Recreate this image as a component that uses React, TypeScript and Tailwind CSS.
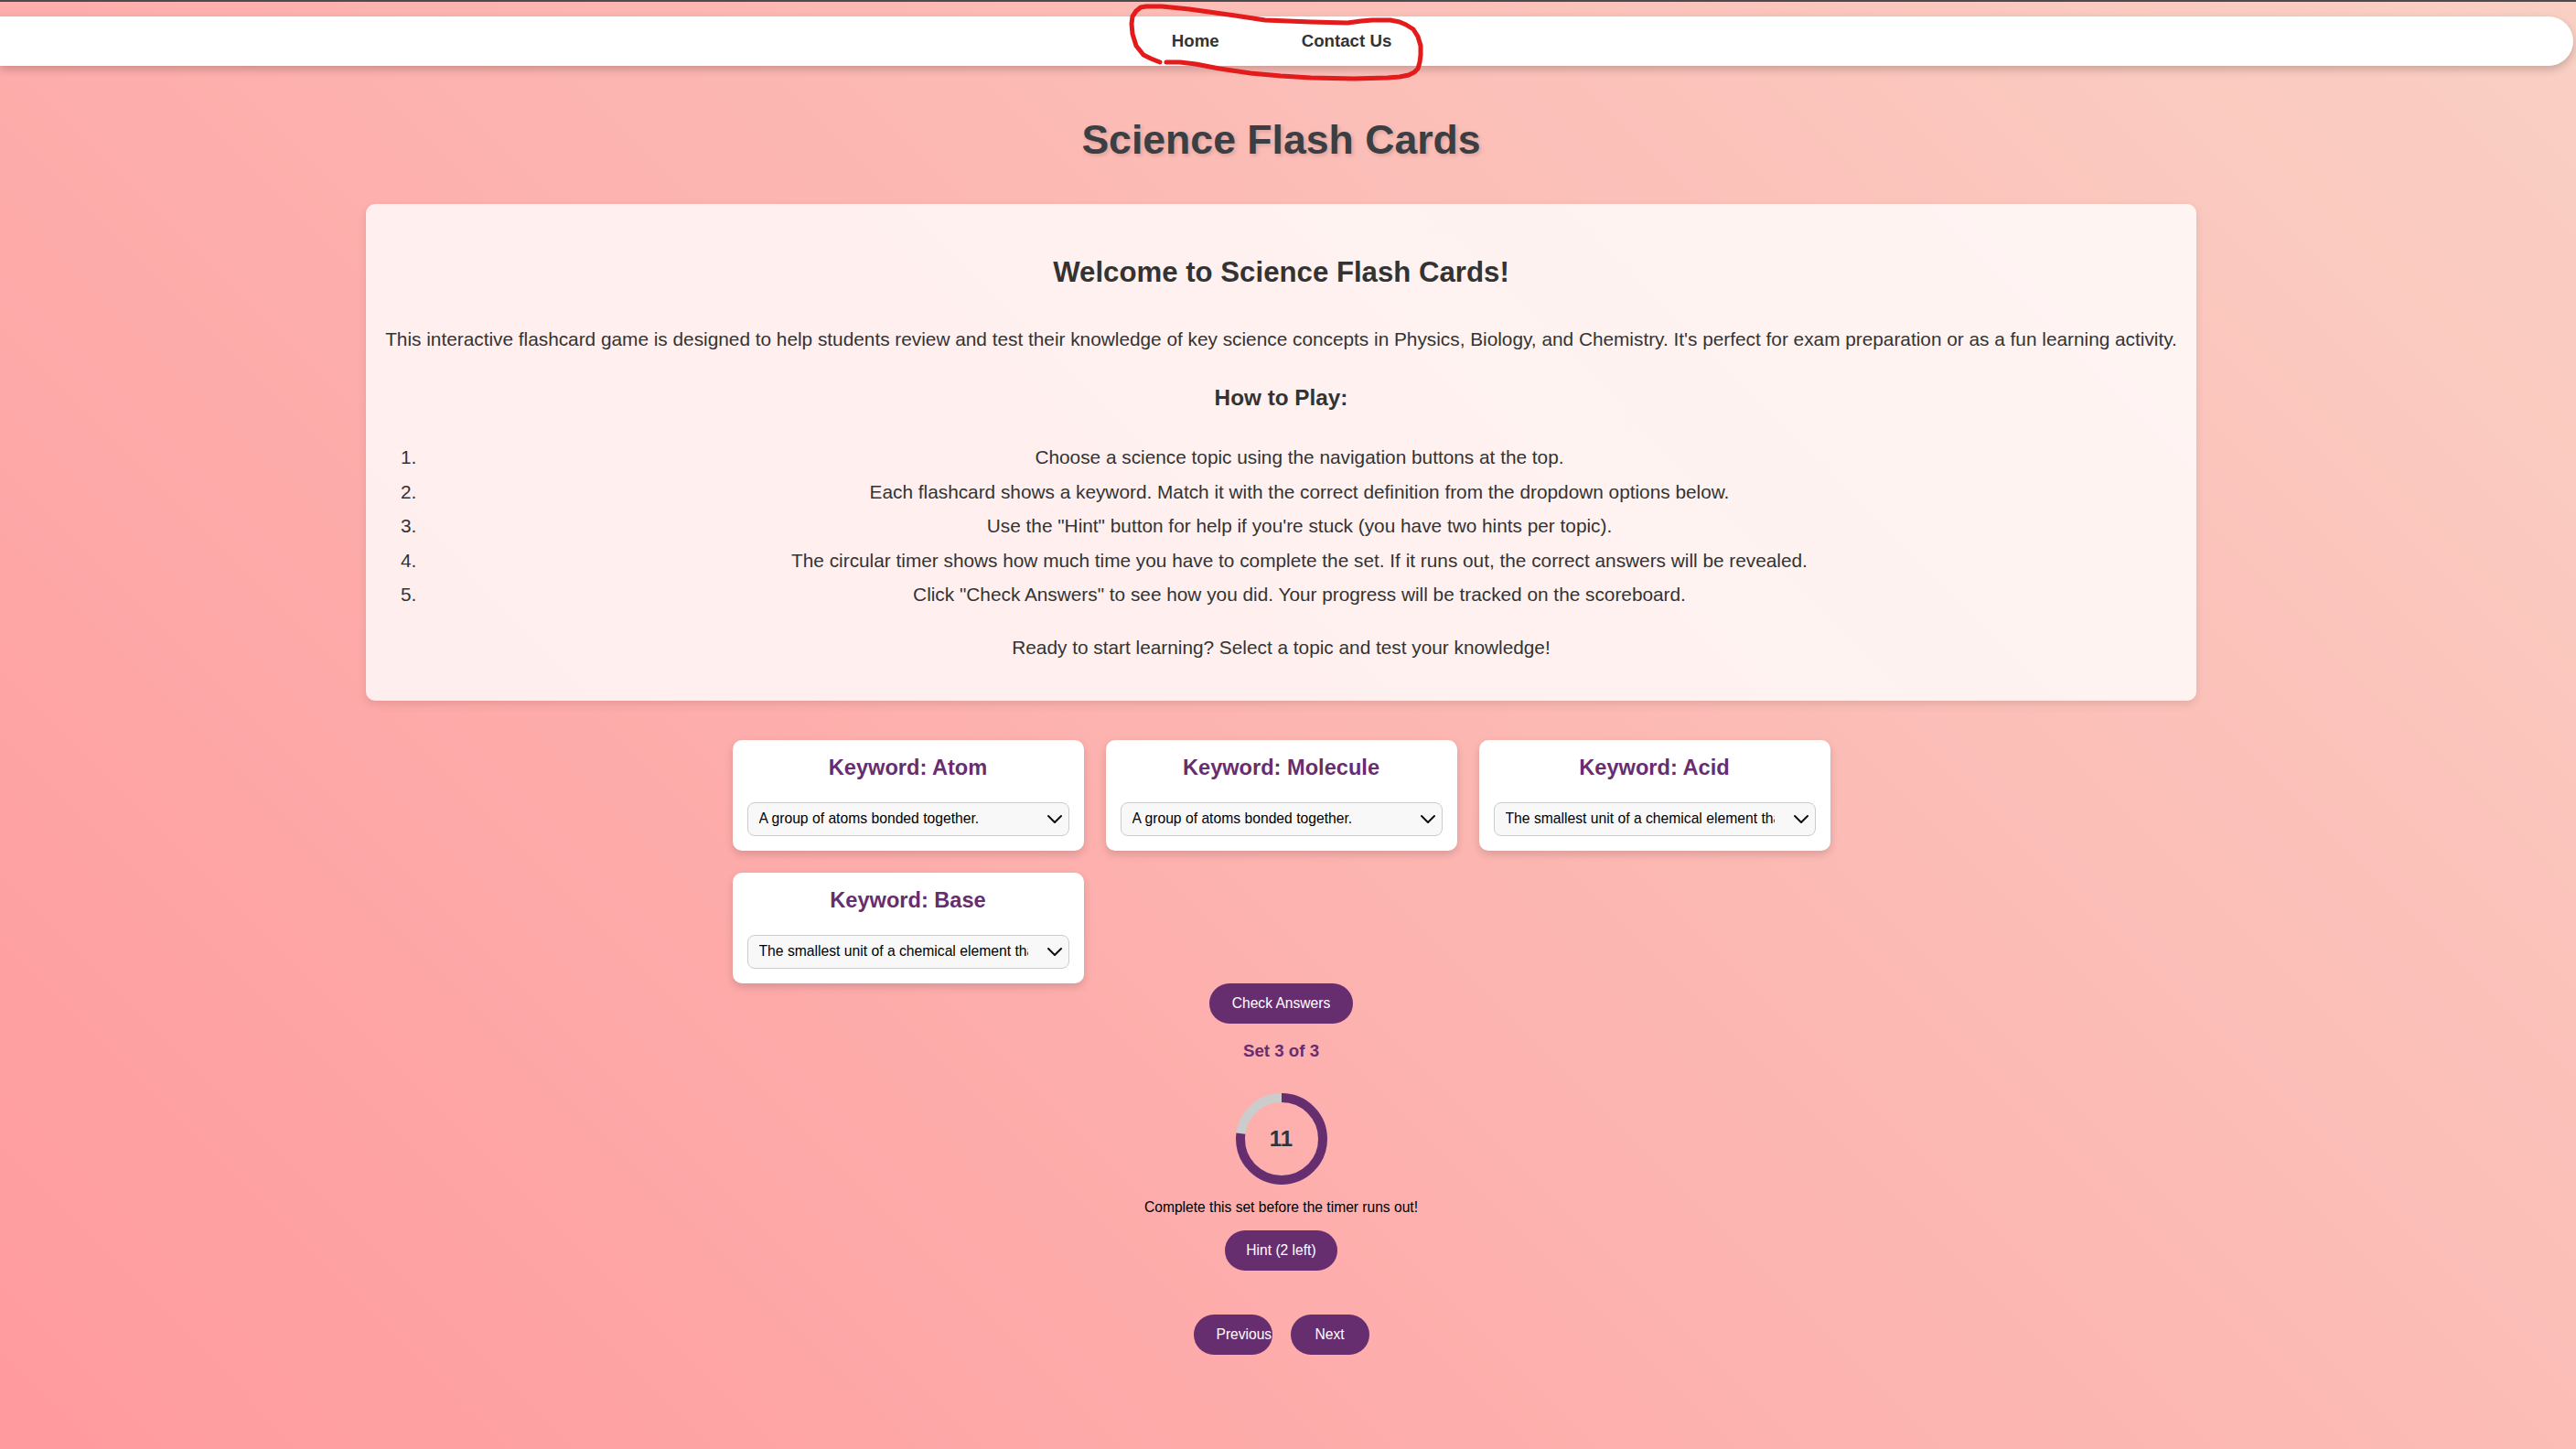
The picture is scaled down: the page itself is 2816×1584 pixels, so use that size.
import React from 'react';

const cards = [
  { keyword: 'Atom', answer: 'A group of atoms bonded together.' },
  { keyword: 'Molecule', answer: 'A group of atoms bonded together.' },
  { keyword: 'Acid', answer: 'The smallest unit of a chemical element that retains its properties.' },
  { keyword: 'Base', answer: 'The smallest unit of a chemical element that retains its properties.' },
];

const options = [
  'A group of atoms bonded together.',
  'The smallest unit of a chemical element that retains its properties.',
  'A substance that donates hydrogen ions.',
  'A substance that accepts hydrogen ions.',
];

const steps = [
  'Choose a science topic using the navigation buttons at the top.',
  'Each flashcard shows a keyword. Match it with the correct definition from the dropdown options below.',
  'Use the "Hint" button for help if you\'re stuck (you have two hints per topic).',
  'The circular timer shows how much time you have to complete the set. If it runs out, the correct answers will be revealed.',
  'Click "Check Answers" to see how you did. Your progress will be tracked on the scoreboard.',
];

// red pen circle drawn over the nav links
const scribble =
  'M1268,68 L1258,64 L1250,60 L1242,50 L1238,37 L1237,26 L1238,18 L1242,12 L1247,8 L1253,7 L1270,7 L1300,10 L1350,17 L1383,22 L1433,24 L1473,25 L1488,23 L1500,22 L1520,22 L1530,24 L1537,27 L1545,32 L1550,40 L1553,50 L1553,60 L1552,68 L1550,75 L1546,79 L1540,82 L1530,84 L1517,85 L1480,86 L1433,85 L1400,83 L1367,80 L1333,75 L1307,70 L1290,68 L1275,68';

const FlashCard = ({ keyword, answer }: { keyword: string; answer: string }) => (
  <div className="bg-white rounded-[10px] shadow-[0_4px_10px_rgba(0,0,0,0.15)] px-[16px] pt-[16px] pb-[16px]">
    <h3 className="text-center text-[23.6px] leading-[28px] font-bold text-[#672e6f]">Keyword: {keyword}</h3>
    <div className="relative mt-[24px]">
      <select
        defaultValue={answer}
        className="appearance-none w-full h-[37px] rounded-[8px] border border-[#cccccc] bg-[#f8f8f8] pl-[12px] pr-[44px] text-[15.7px] text-black outline-none"
      >
        {options.map((o) => (
          <option key={o} value={o}>{o}</option>
        ))}
      </select>
      <svg className="absolute right-[8px] top-[14px] pointer-events-none" width="16" height="9" viewBox="0 0 16 9">
        <polyline points="1,1 8,8 15,1" fill="none" stroke="#111" strokeWidth="2" strokeLinecap="round" strokeLinejoin="round" />
      </svg>
    </div>
  </div>
);

const Timer = ({ seconds, fraction }: { seconds: number; fraction: number }) => {
  const r = 45;
  const c = 2 * Math.PI * r;
  return (
    <div className="relative w-[100px] h-[100px]">
      <svg width="100" height="100" viewBox="0 0 100 100">
        <circle cx="50" cy="50" r={r} fill="none" stroke="#cccccc" strokeWidth="10" />
        <circle
          cx="50"
          cy="50"
          r={r}
          fill="none"
          stroke="#672e6f"
          strokeWidth="10"
          strokeDasharray={`${c * fraction} ${c}`}
          transform="rotate(-90 50 50)"
        />
      </svg>
      <div className="absolute inset-0 flex items-center justify-center text-[24px] font-bold text-[#333333]">{seconds}</div>
    </div>
  );
};

export default function App() {
  return (
    <div className="relative min-h-screen overflow-hidden font-['Liberation_Sans',Arial,sans-serif] bg-[linear-gradient(45deg,#ff9a9e_0%,#fad0c4_100%)] text-[#333333]">
      <div className="h-[2px] bg-[#4b4b4f]" />
      <nav className="mt-[16px] h-[54px] w-[2813px] bg-white rounded-r-[27px] shadow-[0_4px_10px_rgba(0,0,0,0.2)] flex items-center justify-center pr-[11px]">
        <div className="flex gap-[90px] text-[18.7px] font-bold text-[#333333]">
          <a href="#">Home</a>
          <a href="#">Contact Us</a>
        </div>
      </nav>

      <main className="pr-[15px] flex flex-col items-center">
        <h1 className="mt-[55px] text-[44.6px] leading-[52px] font-bold text-[#3b3e43] [text-shadow:2px_2px_4px_rgba(0,0,0,0.15)]">
          Science Flash Cards
        </h1>

        <section className="mt-[44px] w-[2001px] rounded-[10px] bg-[rgba(255,255,255,0.8)] shadow-[0_4px_10px_rgba(0,0,0,0.1)] px-[21px] pt-[21px] pb-[46px] text-center">
          <h2 className="mt-[36px] text-[31.2px] leading-[36px] font-bold">Welcome to Science Flash Cards!</h2>
          <p className="mt-[43px] text-[20.8px] leading-[24px] whitespace-nowrap">
            This interactive flashcard game is designed to help students review and test their knowledge of key science concepts in Physics, Biology, and Chemistry. It's perfect for exam preparation or as a fun learning activity.
          </p>
          <h3 className="mt-[38px] text-[24.3px] leading-[28px] font-bold">How to Play:</h3>
          <ol className="mt-[32px] list-decimal pl-[40px] text-[20.8px] leading-[37.5px]">
            {steps.map((s) => (
              <li key={s}>{s}</li>
            ))}
          </ol>
          <p className="mt-[27px] text-[20.8px] leading-[24px]">
            Ready to start learning? Select a topic and test your knowledge!
          </p>
        </section>

        <div className="mt-[43px] grid grid-cols-[repeat(3,384px)] gap-[24px]">
          {cards.map((c) => (
            <FlashCard key={c.keyword} keyword={c.keyword} answer={c.answer} />
          ))}
        </div>

        <button className="h-[44px] px-[24.5px] rounded-full bg-[#672e6f] text-white text-[15.6px]">Check Answers</button>

        <div className="mt-[19px] text-[18.7px] leading-[22px] font-bold text-[#672e6f]">Set 3 of 3</div>

        <div className="mt-[35px]">
          <Timer seconds={11} fraction={0.77} />
        </div>

        <p className="mt-[16px] text-[15.6px] leading-[18px] text-black">Complete this set before the timer runs out!</p>

        <button className="mt-[16px] h-[44px] px-[23.5px] rounded-full bg-[#672e6f] text-white text-[15.6px]">Hint (2 left)</button>

        <div className="mt-[48px] flex gap-[20px] pb-[100px]">
          <button className="w-[86px] h-[44px] pl-[25px] rounded-full bg-[#672e6f] text-white text-[15.6px] text-left whitespace-nowrap overflow-visible">
            Previous
          </button>
          <button className="w-[86px] h-[44px] rounded-full bg-[#672e6f] text-white text-[15.6px]">Next</button>
        </div>
      </main>

      <svg className="absolute left-0 top-0 pointer-events-none" width="2816" height="100" viewBox="0 0 2816 100">
        <path d={scribble} fill="none" stroke="#e31b1b" strokeWidth="5" strokeLinecap="round" strokeLinejoin="round" />
      </svg>
    </div>
  );
}
